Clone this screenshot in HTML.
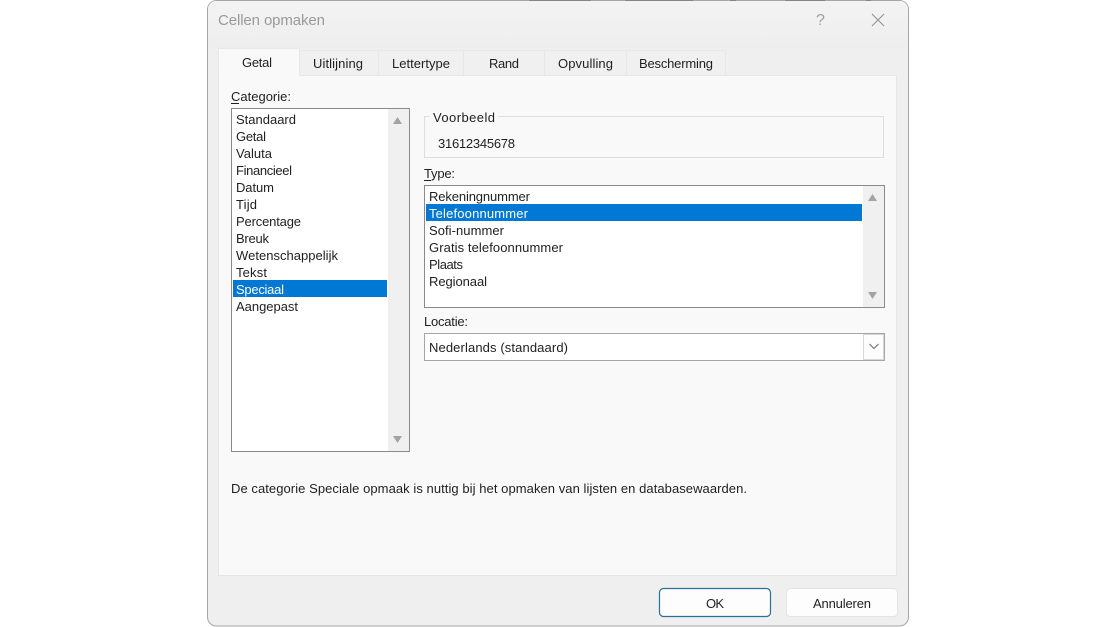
<!DOCTYPE html>
<html><head><meta charset="utf-8"><style>
html,body{margin:0;padding:0;background:#fff;width:1115px;height:627px;overflow:hidden}
svg{display:block}
text{font-family:"Liberation Sans",sans-serif;font-size:13px;fill:#1f1f1f}
</style></head><body>
<svg width="1115" height="627" viewBox="0 0 1115 627" xmlns="http://www.w3.org/2000/svg">
<defs><linearGradient id="g" x1="0" y1="0" x2="0" y2="1"><stop offset="0" stop-color="#f3f3f3"/><stop offset="1" stop-color="#eeeeee"/></linearGradient></defs>
<rect x="207.5" y="0.5" width="701" height="625.500" rx="9" fill="#efefef" stroke="#a6a6a6"/>
<rect x="208" y="1" width="700" height="47" rx="8" fill="url(#g)"/>
<!-- top edge residue -->
<g fill="#666" opacity=".5"><rect x="529" y="0" width="62" height="1"/><rect x="625" y="0" width="68" height="1"/><rect x="730" y="0" width="6" height="1"/><rect x="785" y="0" width="40" height="1"/><rect x="866" y="0" width="5" height="1"/></g>
<text x="218" y="25" style="font-size:15px;fill:#9a9a9a" textLength="107" lengthAdjust="spacing">Cellen opmaken</text>
<text x="816" y="25" style="font-size:16px;fill:#a3a3a3">?</text>
<path d="M872 14L884 26M884 14L872 26" stroke="#949494" stroke-width="1.100" fill="none"/>
<!-- tabs -->
<g fill="#f0f0f0" stroke="#e8e8e8"><rect x="299.5" y="50.5" width="79" height="25"/><rect x="378.5" y="50.5" width="85" height="25"/><rect x="463.5" y="50.5" width="81" height="25"/><rect x="544.5" y="50.5" width="82" height="25"/><rect x="626.5" y="50.5" width="99" height="25"/></g>
<rect x="218.5" y="75.5" width="678" height="500" fill="#f9f9f9" stroke="#e6e6e6"/>
<path d="M218.5 76V48.5H299.5V76" fill="#f9f9f9" stroke="#e8e8e8"/>
<rect x="219" y="74" width="80" height="4" fill="#f9f9f9"/>
<text x="242" y="67" textLength="30" lengthAdjust="spacing">Getal</text>
<text x="313" y="68" textLength="50" lengthAdjust="spacing">Uitlijning</text>
<text x="392" y="68" textLength="58" lengthAdjust="spacing">Lettertype</text>
<text x="489" y="68" textLength="30" lengthAdjust="spacing">Rand</text>
<text x="558" y="68" textLength="55" lengthAdjust="spacing">Opvulling</text>
<text x="639" y="68" textLength="74" lengthAdjust="spacing">Bescherming</text>
<!-- left -->
<text x="231" y="101" textLength="60" lengthAdjust="spacing">Categorie:</text>
<rect x="231" y="103" width="8" height="1" fill="#1f1f1f"/>
<rect x="231.5" y="108.5" width="178" height="343" fill="#fff" stroke="#8a8a8a"/>
<rect x="388" y="109" width="21" height="342" fill="#f0f0f0"/>
<path d="M393 124L397.500 117L402 124Z M393 436L397.500 443L402 436Z" fill="#a3a3a3"/>
<rect x="233" y="280" width="154" height="17" fill="#0078d4"/>
<text x="236" y="124" textLength="60" lengthAdjust="spacing">Standaard</text>
<text x="236" y="141" textLength="30" lengthAdjust="spacing">Getal</text>
<text x="236" y="158" textLength="36" lengthAdjust="spacing">Valuta</text>
<text x="236" y="175" textLength="56" lengthAdjust="spacing">Financieel</text>
<text x="236" y="192" textLength="38" lengthAdjust="spacing">Datum</text>
<text x="236" y="209" textLength="21" lengthAdjust="spacing">Tijd</text>
<text x="236" y="226" textLength="65" lengthAdjust="spacing">Percentage</text>
<text x="236" y="243" textLength="33" lengthAdjust="spacing">Breuk</text>
<text x="236" y="260" textLength="102" lengthAdjust="spacing">Wetenschappelijk</text>
<text x="236" y="277" textLength="31" lengthAdjust="spacing">Tekst</text>
<text x="236" y="294" textLength="48" lengthAdjust="spacing" style="fill:#fff">Speciaal</text>
<text x="236" y="311" textLength="62" lengthAdjust="spacing">Aangepast</text>
<!-- voorbeeld -->
<rect x="424.5" y="116.500" width="459" height="41" fill="none" stroke="#dedede"/>
<rect x="430" y="112" width="68" height="9" fill="#f9f9f9"/>
<text x="433" y="122" textLength="62" lengthAdjust="spacing">Voorbeeld</text>
<text x="438" y="148" textLength="77" lengthAdjust="spacing">31612345678</text>
<!-- type -->
<text x="424" y="178" textLength="31" lengthAdjust="spacing">Type:</text>
<rect x="424" y="180" width="7" height="1" fill="#1f1f1f"/>
<rect x="424.5" y="185.5" width="460" height="122" fill="#fff" stroke="#8a8a8a"/>
<rect x="863" y="186" width="21" height="121" fill="#f0f0f0"/>
<path d="M868 201L872.500 194L877 201Z M868 292L872.500 299L877 292Z" fill="#a3a3a3"/>
<rect x="426" y="204" width="436" height="17" fill="#0078d4"/>
<text x="429" y="201" textLength="101" lengthAdjust="spacing">Rekeningnummer</text>
<text x="429" y="218" textLength="99" lengthAdjust="spacing" style="fill:#fff">Telefoonnummer</text>
<text x="429" y="235" textLength="75" lengthAdjust="spacing">Sofi-nummer</text>
<text x="429" y="252" textLength="134" lengthAdjust="spacing">Gratis telefoonnummer</text>
<text x="429" y="269" textLength="34" lengthAdjust="spacing">Plaats</text>
<text x="429" y="286" textLength="58" lengthAdjust="spacing">Regionaal</text>
<!-- locatie -->
<text x="424" y="326" textLength="44" lengthAdjust="spacing">Locatie:</text>
<rect x="424.5" y="333.500" width="460" height="27" fill="#fff" stroke="#a6a6a6"/>
<rect x="863.500" y="334.500" width="20" height="25" fill="#fdfdfd" stroke="#d6d6d6"/>
<path d="M869.500 344L874 348.500L878.500 344" fill="none" stroke="#6e6e6e" stroke-width="1.100"/>
<text x="429" y="352" textLength="139" lengthAdjust="spacing">Nederlands (standaard)</text>
<!-- desc -->
<text x="231" y="493" textLength="516" lengthAdjust="spacing">De categorie Speciale opmaak is nuttig bij het opmaken van lijsten en databasewaarden.</text>
<!-- buttons -->
<rect x="659.500" y="588.500" width="111" height="28" rx="4" fill="#fdfdfd" stroke="#2a7099" stroke-width="1.200"/>
<text x="706" y="608" textLength="18" lengthAdjust="spacing">OK</text>
<rect x="786.500" y="588.500" width="111" height="28" rx="4" fill="#fdfdfd" stroke="#e4e4e4"/>
<text x="813" y="608" textLength="58" lengthAdjust="spacing">Annuleren</text>
</svg>
</body></html>
